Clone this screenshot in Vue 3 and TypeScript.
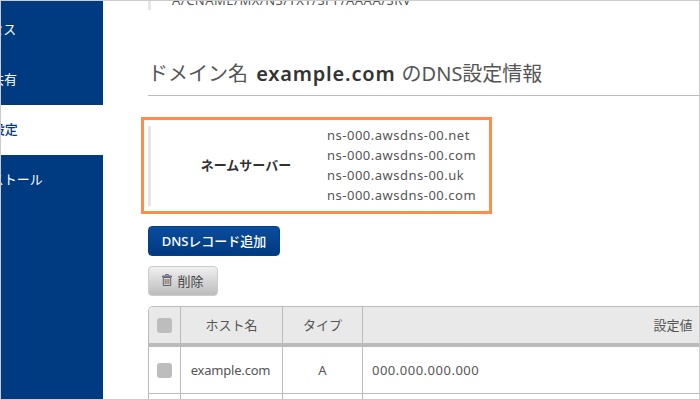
<script setup lang="ts">
const navItems = [
  { label: 'アクセス', active: false },
  { label: '情報共有', active: false },
  { label: 'DNS設定', active: true },
  { label: 'インストール', active: false },
]

const nameServers = [
  'ns-000.awsdns-00.net',
  'ns-000.awsdns-00.com',
  'ns-000.awsdns-00.uk',
  'ns-000.awsdns-00.com',
]
</script>

<template>
  <div class="frame">
    <aside class="sidebar">
      <a v-for="item in navItems" :key="item.label" class="nav-item" :class="{ active: item.active }">
        <span>{{ item.label }}</span>
      </a>
    </aside>

    <main class="content">
      <div class="type-note">A/CNAME/MX/NS/TXT/SPF/AAAA/SRV</div>

      <h2 class="title">ドメイン名 <strong>example.com</strong> のDNS設定情報</h2>

      <div class="highlight">
        <div class="ns-block">
          <div class="ns-label">ネームサーバー</div>
          <div class="ns-list">
            <div v-for="(ns, i) in nameServers" :key="i">{{ ns }}</div>
          </div>
        </div>
      </div>

      <button class="btn btn-primary">DNSレコード追加</button>
      <button class="btn btn-delete">
        <svg class="trash" viewBox="0 0 10 12">
          <path d="M3.5 1.5V.6h3v.9M.5 2h9v1H.5zM1.3 3.5h7.4v8H1.3z" fill="none" stroke="#5a5f78" stroke-width="1" />
          <path d="M3.2 5v5M5 5v5M6.8 5v5" stroke="#8a6a50" stroke-width="1" />
        </svg>
        削除
      </button>

      <table class="records">
        <colgroup>
          <col class="col-check" />
          <col class="col-host" />
          <col class="col-type" />
          <col />
        </colgroup>
        <thead>
          <tr>
            <th><span class="check"></span></th>
            <th>ホスト名</th>
            <th>タイプ</th>
            <th>設定値</th>
          </tr>
        </thead>
        <tbody>
          <tr>
            <td><span class="check"></span></td>
            <td class="host">example.com</td>
            <td>A</td>
            <td class="value">000.000.000.000</td>
          </tr>
          <tr class="next-row">
            <td></td>
            <td></td>
            <td></td>
            <td></td>
          </tr>
        </tbody>
      </table>
    </main>
  </div>
</template>

<style>
html,
body {
  margin: 0;
  background: #fff;
}
</style>

<style scoped>
.frame {
  width: 700px;
  height: 400px;
  box-sizing: border-box;
  border: 1px solid #ccc;
  display: flex;
  overflow: hidden;
  background: #fff;
  font-family: 'Noto Sans', 'Noto Sans CJK JP', sans-serif;
  font-size: 13px;
  color: #444;
}

.sidebar {
  width: 102px;
  flex: none;
  padding-top: 4px;
  background: #003a80;
  overflow: hidden;
}

.nav-item {
  display: flex;
  align-items: center;
  box-sizing: border-box;
  height: 50px;
  padding-bottom: 4px;
  color: #fff;
  white-space: nowrap;
}

.nav-item span {
  margin-left: -36px;
}

.nav-item.active {
  background: #fff;
  color: #003a80;
  font-weight: 500;
}

.content {
  flex: 1;
  min-width: 0;
  padding-left: 45px;
  overflow: hidden;
}

.type-note {
  height: 10px;
  margin-top: -1px;
  padding-left: 21px;
  border-left: 3px solid #e5e5e5;
  line-height: 0;
  letter-spacing: 0.5px;
  white-space: nowrap;
  color: #555;
}

.title {
  margin: 43px 0 21px;
  height: 43px;
  box-sizing: border-box;
  border-bottom: 1px solid #bbb;
  font-size: 20px;
  font-weight: 400;
  line-height: 42px;
  color: #555;
  white-space: nowrap;
}

.title strong {
  margin: 0 1px 0 3px;
  font-weight: 600;
  letter-spacing: 0.8px;
  color: #333;
}

.highlight {
  width: 351px;
  height: 97px;
  box-sizing: border-box;
  margin-left: -7px;
  padding: 6px 4px;
  border: 3px solid #ff8c4a;
}

.ns-block {
  display: flex;
  height: 80px;
  border-left: 3px solid #e5e5e5;
  align-items: center;
}

.ns-label {
  width: 190px;
  flex: none;
  padding-bottom: 3px;
  text-align: center;
  font-weight: 700;
  color: #333;
}

.ns-list {
  align-self: flex-start;
  margin: -1px 0 0 -14px;
  line-height: 20px;
  letter-spacing: 0.5px;
  color: #555;
}

.btn {
  display: flex;
  align-items: center;
  justify-content: center;
  box-sizing: border-box;
  height: 30px;
  padding: 0 0 2px;
  border-radius: 4px;
  font-family: inherit;
  font-size: 13px;
}

.btn-primary {
  width: 132px;
  margin-top: 12px;
  border: 1px solid #00408c;
  background: linear-gradient(#0b4d9c, #003a80);
  color: #fff;
  font-weight: 500;
}

.btn-delete {
  width: 70px;
  margin-top: 10px;
  gap: 5px;
  border: 1px solid #ccc;
  background: linear-gradient(#f0f0f0, #bcbcbc);
  color: #444;
}

.trash {
  width: 10px;
  height: 12px;
}

.records {
  width: 836px;
  margin-top: 10px;
  table-layout: fixed;
  border-collapse: separate;
  border-spacing: 0;
  border-top: 1px solid #bbb;
  border-left: 1px solid #bbb;
  border-top-left-radius: 5px;
  text-align: center;
  color: #555;
}

.col-check {
  width: 32px;
}

.col-host {
  width: 102px;
}

.col-type {
  width: 80px;
}

.records th,
.records td {
  padding: 0;
  border-right: 1px solid #bbb;
  border-bottom: 1px solid #bbb;
  font-weight: 400;
}

.records th {
  height: 34px;
  padding-bottom: 2px;
  background: #e9e9e9;
  border-bottom-width: 4px;
}

.records th:first-child {
  height: 36px;
  border-top-left-radius: 5px;
  padding-bottom: 0;
}

.records td {
  height: 46px;
}

.records td.host {
  padding-right: 2px;
  letter-spacing: -0.2px;
}

.records td.value {
  padding-left: 9px;
  text-align: left;
  letter-spacing: 0.5px;
}

.records .next-row td {
  height: 10px;
}

.check {
  display: block;
  width: 15px;
  height: 15px;
  margin: 0 auto;
  border-radius: 3px;
  background: #bdbdbd;
}
</style>
